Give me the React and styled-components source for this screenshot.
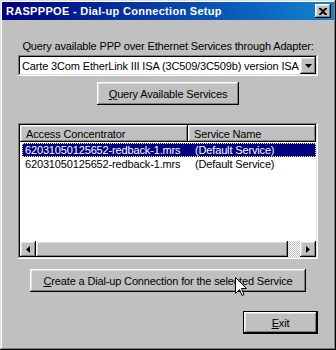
import React from 'react';
import styled, { createGlobalStyle } from 'styled-components';

const GlobalStyle = createGlobalStyle`
  html, body {
    margin: 0;
    padding: 0;
    background: #c0c0c0;
  }
  * {
    box-sizing: border-box;
  }
`;

const raised = `
  box-shadow: inset -1px -1px #000, inset 1px 1px #fff,
    inset -2px -2px #808080, inset 2px 2px #dfdfdf;
`;

const sunken = `
  box-shadow: inset -1px -1px #fff, inset 1px 1px #808080,
    inset -2px -2px #dfdfdf, inset 2px 2px #000;
`;

const StyledWindow = styled.div`
  position: relative;
  width: 336px;
  height: 350px;
  padding: 2px;
  background: #c0c0c0;
  font-family: 'Liberation Sans', Arial, sans-serif;
  font-size: 11px;
  letter-spacing: -0.15px;
  color: #000;
  box-shadow: inset -1px -1px #000, inset 1px 1px #dfdfdf,
    inset -2px -2px #808080, inset 2px 2px #fff;
  display: flex;
  flex-direction: column;
`;
const StyledTitleBar = styled.div`
  display: flex;
  align-items: center;
  justify-content: space-between;
  height: 18px;
  padding: 0 3px 0 4px;
  background: linear-gradient(90deg, #000080, #1084d0);
`;
const StyledTitle = styled.span`
  color: #fff;
  font-weight: bold;
  font-size: 11px;
  letter-spacing: 0.3px;
`;
const StyledClose = styled.div`
  display: flex;
  align-items: center;
  justify-content: center;
  width: 16px;
  height: 14px;
  background: #c0c0c0;
  ${raised}
`;
const StyledBody = styled.div`
  display: flex;
  flex-direction: column;
  align-items: center;
  padding: 0 16px;
`;
const StyledLabel = styled.div`
  margin-top: 20px;
  line-height: 13px;
  white-space: nowrap;
`;
const StyledCombo = styled.div`
  display: flex;
  align-items: center;
  margin-top: 2px;
  width: 300px;
  height: 21px;
  padding: 2px;
  background: #fff;
  ${sunken}
`;
const StyledComboText = styled.div`
  flex: 1;
  padding-left: 2px;
  white-space: nowrap;
  overflow: hidden;
`;
const StyledArrowButton = styled.div`
  display: flex;
  align-items: center;
  justify-content: center;
  width: ${(p) => p.$w || 16}px;
  height: ${(p) => p.$h || 17}px;
  background: #c0c0c0;
  flex-shrink: 0;
  ${raised}
`;
const StyledButton = styled.div`
  display: flex;
  align-items: center;
  justify-content: center;
  margin-top: ${(p) => p.$top}px;
  width: ${(p) => p.$w}px;
  height: 23px;
  background: #c0c0c0;
  white-space: nowrap;
  ${(p) =>
    p.$default
      ? `box-shadow: inset 0 0 0 1px #000, inset -2px -2px #000, inset 2px 2px #fff,
    inset -3px -3px #808080, inset 3px 3px #dfdfdf;`
      : raised}
  u {
    text-decoration: underline;
    text-underline-offset: 1px;
  }
`;
const StyledListView = styled.div`
  display: flex;
  flex-direction: column;
  margin-top: 18px;
  width: 300px;
  height: 136px;
  padding: 2px;
  background: #fff;
  ${sunken}
`;
const StyledHeader = styled.div`
  display: flex;
  height: 17px;
`;
const StyledHeaderCell = styled.div`
  display: flex;
  align-items: center;
  width: ${(p) => (p.$w ? `${p.$w}px` : 'auto')};
  flex: ${(p) => (p.$w ? 'none' : 1)};
  padding-left: 6px;
  background: #c0c0c0;
  ${raised}
`;
const StyledRows = styled.div`
  flex: 1;
  padding: 1px 0 0 2px;
`;
const StyledRow = styled.div`
  display: flex;
  align-items: center;
  height: 14px;
  background: ${(p) => (p.$selected ? '#000080' : 'transparent')};
  color: ${(p) => (p.$selected ? '#fff' : '#000')};
  border: 1px dotted ${(p) => (p.$selected ? '#ffff7f' : 'transparent')};
`;
const StyledCell = styled.div`
  width: ${(p) => (p.$w ? `${p.$w}px` : 'auto')};
  flex: ${(p) => (p.$w ? 'none' : 1)};
  padding-left: 2px;
  white-space: nowrap;
`;
const StyledScrollBar = styled.div`
  display: flex;
  height: 16px;
`;
const StyledThumb = styled.div`
  width: 252px;
  height: 16px;
  background: #c0c0c0;
  ${raised}
`;
const StyledTrack = styled.div`
  flex: 1;
  background: repeating-conic-gradient(#c0c0c0 0 25%, #fff 0 50%) 0 0 / 2px 2px;
`;
const StyledFooter = styled.div`
  display: flex;
  justify-content: flex-end;
  width: 300px;
`;
const StyledCursor = styled.svg`
  position: absolute;
  left: 235px;
  top: 277px;
`;

const Triangle = ({ dir }) => {
  const pts = {
    down: '0,0 7,0 3.5,4',
    left: '4,0 4,7 0,3.5',
    right: '0,0 0,7 4,3.5',
  };
  const size = dir === 'down' ? [7, 4] : [4, 7];
  return (
    <svg width={size[0]} height={size[1]} viewBox={`0 0 ${size[0]} ${size[1]}`}>
      <polygon points={pts[dir]} fill='#000' />
    </svg>
  );
};

const rows = [
  { ac: '62031050125652-redback-1.mrs', sn: '(Default Service)', selected: true },
  { ac: '62031050125652-redback-1.mrs', sn: '(Default Service)' },
];

const App = () => (
  <>
    <GlobalStyle />
    <StyledWindow>
      <StyledTitleBar>
        <StyledTitle>RASPPPOE - Dial-up Connection Setup</StyledTitle>
        <StyledClose>
          <svg width='8' height='7' viewBox='0 0 8 7'>
            <path
              d='M0 0h2l2 2 2-2h2v1L5 3.5 8 6v1H6L4 5 2 7H0V6l3-2.5L0 1z'
              fill='#000'
            />
          </svg>
        </StyledClose>
      </StyledTitleBar>
      <StyledBody>
        <StyledLabel>
          Query available PPP over Ethernet Services through Adapter:
        </StyledLabel>
        <StyledCombo>
          <StyledComboText>
            Carte 3Com EtherLink III ISA (3C509/3C509b) version ISA
          </StyledComboText>
          <StyledArrowButton>
            <Triangle dir='down' />
          </StyledArrowButton>
        </StyledCombo>
        <StyledButton $top={6} $w={142}>
          <span>
            <u>Q</u>uery Available Services
          </span>
        </StyledButton>
        <StyledListView>
          <StyledHeader>
            <StyledHeaderCell $w={168}>Access Concentrator</StyledHeaderCell>
            <StyledHeaderCell>Service Name</StyledHeaderCell>
          </StyledHeader>
          <StyledRows>
            {rows.map((row, i) => (
              <StyledRow key={i} $selected={row.selected}>
                <StyledCell $w={170}>{row.ac}</StyledCell>
                <StyledCell>{row.sn}</StyledCell>
              </StyledRow>
            ))}
          </StyledRows>
          <StyledScrollBar>
            <StyledArrowButton $h={16}>
              <Triangle dir='left' />
            </StyledArrowButton>
            <StyledThumb />
            <StyledTrack />
            <StyledArrowButton $h={16}>
              <Triangle dir='right' />
            </StyledArrowButton>
          </StyledScrollBar>
        </StyledListView>
        <StyledButton $top={10} $w={276}>
          <span>
            <u>C</u>reate a Dial-up Connection for the selected Service
          </span>
        </StyledButton>
        <StyledFooter>
          <StyledButton $top={19} $w={75} $default>
            <span>
              <u>E</u>xit
            </span>
          </StyledButton>
        </StyledFooter>
      </StyledBody>
      <StyledCursor width='12' height='19' viewBox='0 0 12 19'>
        <path
          d='M0.5 0.5V16.5L4.5 12.5L7 18.5L9 17.5L6.5 11.5H11.5Z'
          fill='#fff'
          stroke='#000'
          strokeWidth='1'
        />
      </StyledCursor>
    </StyledWindow>
  </>
);

export default App;
